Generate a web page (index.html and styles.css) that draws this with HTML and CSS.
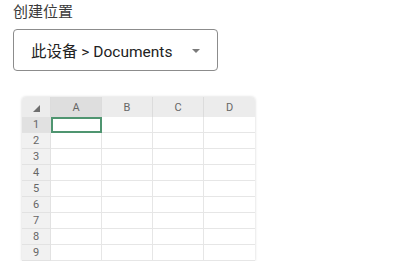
FILE: index.html
```html
<!DOCTYPE html>
<html lang="zh">
<head>
<meta charset="utf-8">
<link rel="stylesheet" href="styles.css">
</head>
<body>
<div class="page">
  <div class="label">创建位置</div>
  <div class="select">
    <span class="select-text">此设备 &gt; Documents</span>
    <svg class="arrow" width="8" height="4" viewBox="0 0 8 4"><path d="M0 0 L8 0 L4 4 Z" fill="#7a7a7a"/></svg>
  </div>
  <div class="sheet">
    <div class="hc corner"><svg width="7" height="7" viewBox="0 0 7 7"><path d="M7 0 L7 7 L0 7 Z" fill="#6e6e6e"/></svg></div>
    <div class="hc sel">A</div>
    <div class="hc">B</div>
    <div class="hc">C</div>
    <div class="hc last">D</div>

    <div class="rh sel">1</div><div class="c active"></div><div class="c"></div><div class="c"></div><div class="c last"></div>
    <div class="rh">2</div><div class="c"></div><div class="c"></div><div class="c"></div><div class="c last"></div>
    <div class="rh">3</div><div class="c"></div><div class="c"></div><div class="c"></div><div class="c last"></div>
    <div class="rh">4</div><div class="c"></div><div class="c"></div><div class="c"></div><div class="c last"></div>
    <div class="rh">5</div><div class="c"></div><div class="c"></div><div class="c"></div><div class="c last"></div>
    <div class="rh">6</div><div class="c"></div><div class="c"></div><div class="c"></div><div class="c last"></div>
    <div class="rh">7</div><div class="c"></div><div class="c"></div><div class="c"></div><div class="c last"></div>
    <div class="rh">8</div><div class="c"></div><div class="c"></div><div class="c"></div><div class="c last"></div>
    <div class="rh">9</div><div class="c"></div><div class="c"></div><div class="c"></div><div class="c last"></div>
  </div>
</div>
</body>
</html>
```
FILE: styles.css
```css
html, body {
  margin: 0;
  padding: 0;
  background: #fff;
  overflow: hidden;
}
body {
  width: 412px;
  height: 261px;
  font-family: Roboto, "Noto Sans CJK SC", sans-serif;
}
.page {
  display: flex;
  flex-direction: column;
  align-items: flex-start;
  padding: 2px 0 0 13px;
}
.label {
  font-size: 15px;
  line-height: 20px;
  color: #3a3a3a;
}
.select {
  margin-top: 7px;
  box-sizing: border-box;
  width: 205px;
  height: 42px;
  border: 1px solid #8c8c8c;
  border-radius: 4px;
  display: flex;
  align-items: center;
  justify-content: space-between;
  padding: 0 17px 0 17px;
}
.select-text {
  font-size: 15.5px;
  color: #222;
}
.arrow {
  display: block;
  margin-top: 1px;
}
.sheet {
  margin-top: 26px;
  margin-left: 9px;
  display: grid;
  grid-template-columns: 29px 51px 51px 51px 51px;
  grid-template-rows: 20px;
  grid-auto-rows: 16px;
  border-radius: 4px 4px 0 0;
  box-shadow: 0 0 3px rgba(0,0,0,0.18);
  overflow: hidden;
  background: #fff;
}
.hc {
  background: #ececec;
  border-right: 1px solid #dcdcdc;
  display: flex;
  align-items: center;
  justify-content: center;
  font-size: 11px;
  color: #666;
}
.hc.sel {
  background: #dedede;
}
.hc.last { border-right: none; }
.corner svg {
  margin-top: 2px;
}
.rh {
  background: #f1f1f1;
  border-bottom: 1px solid #e2e2e2;
  border-right: 1px solid #e2e2e2;
  display: flex;
  align-items: center;
  justify-content: center;
  font-size: 11px;
  color: #666;
}
.rh.sel { background: #e1e1e1; }
.c {
  border-right: 1px solid #e6e6e6;
  border-bottom: 1px solid #e6e6e6;
}
.c.last { border-right: none; }
.c.active {
  box-sizing: border-box;
  border: 2px solid #4f9570;
}
```
